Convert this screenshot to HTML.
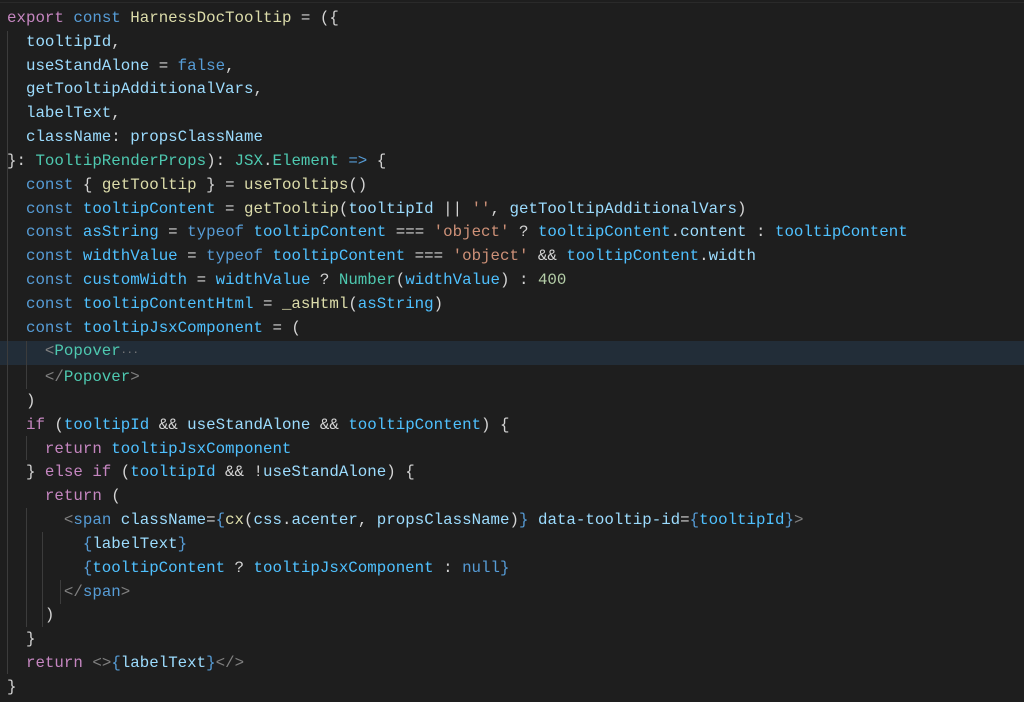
<!DOCTYPE html>
<html><head><meta charset="utf-8"><style>
html,body{margin:0;padding:0;background:#1e1e1e;width:1024px;height:702px;overflow:hidden}
.code{position:absolute;left:7px;top:7px;font-family:"Liberation Mono",monospace;font-size:15.8px;line-height:23.82px;white-space:pre;color:#d4d4d4;z-index:2}
.k{color:#c586c0}.s{color:#569cd6}.f{color:#dcdcaa}.v{color:#9cdcfe}.c{color:#4fc1ff}.t{color:#4ec9b0}.str{color:#ce9178}.n{color:#b5cea8}.g{color:#808080}
.hl{position:absolute;left:0;top:341px;width:1024px;height:24px;background:#222d38;z-index:1}
.guide{position:absolute;width:1px;background:#3c3c3c;z-index:1}
.top{position:absolute;left:0;top:2px;width:1024px;height:1px;background:#2a2a2a}
</style></head><body>
<div class="top"></div>
<div class="hl"></div>
<div class="guide" style="left:7px;top:31px;height:643px"></div>
<div class="guide" style="left:26px;top:341px;height:48px"></div>
<div class="guide" style="left:26px;top:508px;height:119px"></div>
<div class="guide" style="left:42px;top:532px;height:95px"></div>
<div class="guide" style="left:60px;top:580px;height:24px"></div>
<div class="guide" style="left:26px;top:436px;height:24px"></div>
<div class="code"><span class="k">export</span> <span class="s">const</span> <span class="f">HarnessDocTooltip</span> = ({
  <span class="v">tooltipId</span>,
  <span class="v">useStandAlone</span> = <span class="s">false</span>,
  <span class="v">getTooltipAdditionalVars</span>,
  <span class="v">labelText</span>,
  <span class="v">className</span>: <span class="v">propsClassName</span>
}: <span class="t">TooltipRenderProps</span>): <span class="t">JSX</span>.<span class="t">Element</span> <span class="s">=&gt;</span> {
  <span class="s">const</span> { <span class="f">getTooltip</span> } = <span class="f">useTooltips</span>()
  <span class="s">const</span> <span class="c">tooltipContent</span> = <span class="f">getTooltip</span>(<span class="v">tooltipId</span> || <span class="str">''</span>, <span class="v">getTooltipAdditionalVars</span>)
  <span class="s">const</span> <span class="c">asString</span> = <span class="s">typeof</span> <span class="c">tooltipContent</span> === <span class="str">'object'</span> ? <span class="c">tooltipContent</span>.<span class="v">content</span> : <span class="c">tooltipContent</span>
  <span class="s">const</span> <span class="c">widthValue</span> = <span class="s">typeof</span> <span class="c">tooltipContent</span> === <span class="str">'object'</span> &amp;&amp; <span class="c">tooltipContent</span>.<span class="v">width</span>
  <span class="s">const</span> <span class="c">customWidth</span> = <span class="c">widthValue</span> ? <span class="t">Number</span>(<span class="c">widthValue</span>) : <span class="n">400</span>
  <span class="s">const</span> <span class="c">tooltipContentHtml</span> = <span class="f">_asHtml</span>(<span class="c">asString</span>)
  <span class="s">const</span> <span class="c">tooltipJsxComponent</span> = (
    <span class="g">&lt;</span><span class="t">Popover</span><span class="g" style="font-size:10px">···</span>
    <span class="g">&lt;/</span><span class="t">Popover</span><span class="g">&gt;</span>
  )
  <span class="k">if</span> (<span class="c">tooltipId</span> &amp;&amp; <span class="v">useStandAlone</span> &amp;&amp; <span class="c">tooltipContent</span>) {
    <span class="k">return</span> <span class="c">tooltipJsxComponent</span>
  } <span class="k">else if</span> (<span class="c">tooltipId</span> &amp;&amp; !<span class="v">useStandAlone</span>) {
    <span class="k">return</span> (
      <span class="g">&lt;</span><span class="s">span</span> <span class="v">className</span>=<span class="s">{</span><span class="f">cx</span>(<span class="v">css</span>.<span class="v">acenter</span>, <span class="v">propsClassName</span>)<span class="s">}</span> <span class="v">data-tooltip-id</span>=<span class="s">{</span><span class="c">tooltipId</span><span class="s">}</span><span class="g">&gt;</span>
        <span class="s">{</span><span class="v">labelText</span><span class="s">}</span>
        <span class="s">{</span><span class="c">tooltipContent</span> ? <span class="c">tooltipJsxComponent</span> : <span class="s">null</span><span class="s">}</span>
      <span class="g">&lt;/</span><span class="s">span</span><span class="g">&gt;</span>
    )
  }
  <span class="k">return</span> <span class="g">&lt;&gt;</span><span class="s">{</span><span class="v">labelText</span><span class="s">}</span><span class="g">&lt;/&gt;</span>
}</div>
</body></html>
